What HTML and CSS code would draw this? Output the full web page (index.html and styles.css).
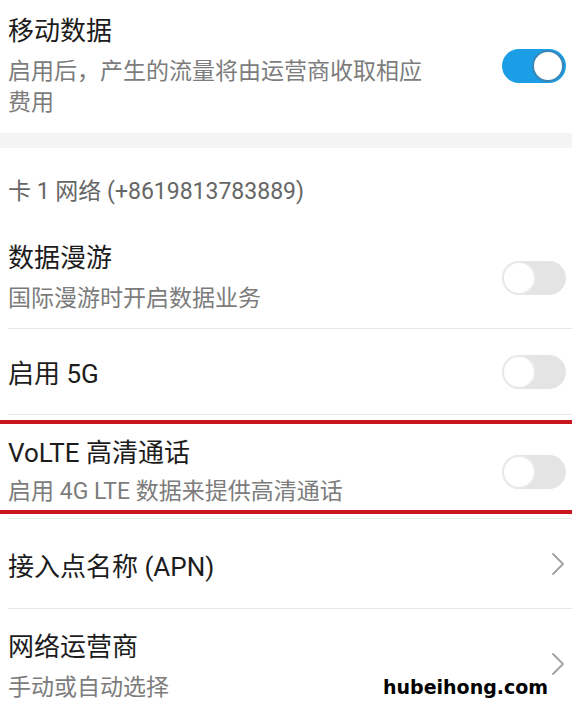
FILE: index.html
```html
<!DOCTYPE html>
<html lang="zh-CN">
<head>
<meta charset="utf-8">
<title>移动网络</title>
<link rel="stylesheet" href="styles.css">
</head>
<body>
<div class="page">
  <div class="row row-first">
    <div class="text">
      <div class="title">移动数据</div>
      <div class="sub">启用后，产生的流量将由运营商收取相应费用</div>
    </div>
    <span class="switch on"><span class="knob"></span></span>
  </div>

  <div class="band"></div>

  <div class="header">卡 1 网络 (+8619813783889)</div>

  <div class="row row-roam divided">
    <div class="text">
      <div class="title">数据漫游</div>
      <div class="sub">国际漫游时开启数据业务</div>
    </div>
    <span class="switch"><span class="knob"></span></span>
  </div>

  <div class="row row-5g divided">
    <div class="text">
      <div class="title">启用 5G</div>
    </div>
    <span class="switch"><span class="knob"></span></span>
  </div>

  <div class="row row-volte">
    <div class="text">
      <div class="title">VoLTE 高清通话</div>
      <div class="sub">启用 4G LTE 数据来提供高清通话</div>
    </div>
    <span class="switch"><span class="knob"></span></span>
  </div>

  <div class="row row-apn divided topline">
    <div class="text">
      <div class="title">接入点名称 (APN)</div>
    </div>
    <svg class="chev" width="14" height="24" viewBox="0 0 14 24"><polyline points="2,2 12,12 2,22" fill="none" stroke="#a0a0a0" stroke-width="1.8" stroke-linecap="round" stroke-linejoin="round"/></svg>
  </div>

  <div class="row row-op">
    <div class="text">
      <div class="title">网络运营商</div>
      <div class="sub">手动或自动选择</div>
    </div>
    <svg class="chev" width="14" height="24" viewBox="0 0 14 24"><polyline points="2,2 12,12 2,22" fill="none" stroke="#a0a0a0" stroke-width="1.8" stroke-linecap="round" stroke-linejoin="round"/></svg>
  </div>

  <div class="watermark">hubeihong.com</div>
</div>
</body>
</html>
```
FILE: styles.css
```css
html, body {
  margin: 0;
  padding: 0;
  background: #ffffff;
}

.page {
  position: relative;
  width: 572px;
  height: 711px;
  overflow: hidden;
  font-family: Roboto, "Noto Sans CJK SC", sans-serif;
  color: #1f1f1f;
}

.row {
  display: flex;
  align-items: center;
  justify-content: space-between;
  padding-left: 8px;
  padding-right: 6px;
}

.text {
  display: flex;
  flex-direction: column;
  gap: 8px;
  max-width: 428px;
}

.title {
  font-size: 26px;
  line-height: 34px;
  color: #1c1c1c;
}

.sub {
  font-size: 23px;
  line-height: 31px;
  color: #7c7c7c;
}

.row-first {
  padding-top: 14px;
  padding-bottom: 15px;
}

.band {
  height: 15px;
  background: #f4f4f4;
}

.header {
  padding: 29px 8px 16px;
  font-size: 23px;
  line-height: 30px;
  color: #666666;
}

.divided {
  position: relative;
}

.divided::after {
  content: "";
  position: absolute;
  left: 8px;
  right: 0;
  bottom: 0;
  height: 1px;
  background: #e6e6e6;
}

.topline::before {
  content: "";
  position: absolute;
  left: 8px;
  right: 0;
  top: 4px;
  height: 1px;
  background: #ececec;
}

.row-roam {
  padding-top: 18px;
  padding-bottom: 15px;
}

.row-5g {
  height: 86px;
}

.row-5g .title {
  margin-top: 3px;
}

.row-volte {
  margin-top: 5px;
  border-top: 4px solid #c9151e;
  border-bottom: 4px solid #c9151e;
  padding-top: 12px;
  padding-bottom: 3px;
}

.row-volte .text {
  gap: 6px;
}

.row-apn {
  height: 89px;
  padding-top: 6px;
  padding-right: 7px;
}

.row-apn .title {
  margin-top: 5px;
}

.row-apn .chev {
  margin-top: -2px;
}

.row-op {
  padding-top: 21px;
  padding-right: 7px;
}

.switch {
  position: relative;
  flex: none;
  width: 64px;
  height: 34px;
  border-radius: 17px;
  background: #e4e4e4;
}

.switch .knob {
  position: absolute;
  left: 0;
  top: 0;
  width: 30px;
  height: 30px;
  border-radius: 50%;
  background: #ffffff;
  border: 2px solid #e9e9e9;
}

.switch.on {
  background: #1b9ee6;
}

.switch.on .knob {
  left: auto;
  right: 2px;
  top: 1px;
  width: 28px;
  height: 28px;
  border-color: #3a86b4;
}

.chev {
  flex: none;
  display: block;
}

.row-op .chev {
  margin-top: -6px;
}

.watermark {
  position: absolute;
  left: 383px;
  top: 674px;
  font-family: "DejaVu Sans", sans-serif;
  font-weight: bold;
  font-size: 19px;
  line-height: 26px;
  color: #000000;
}
```
